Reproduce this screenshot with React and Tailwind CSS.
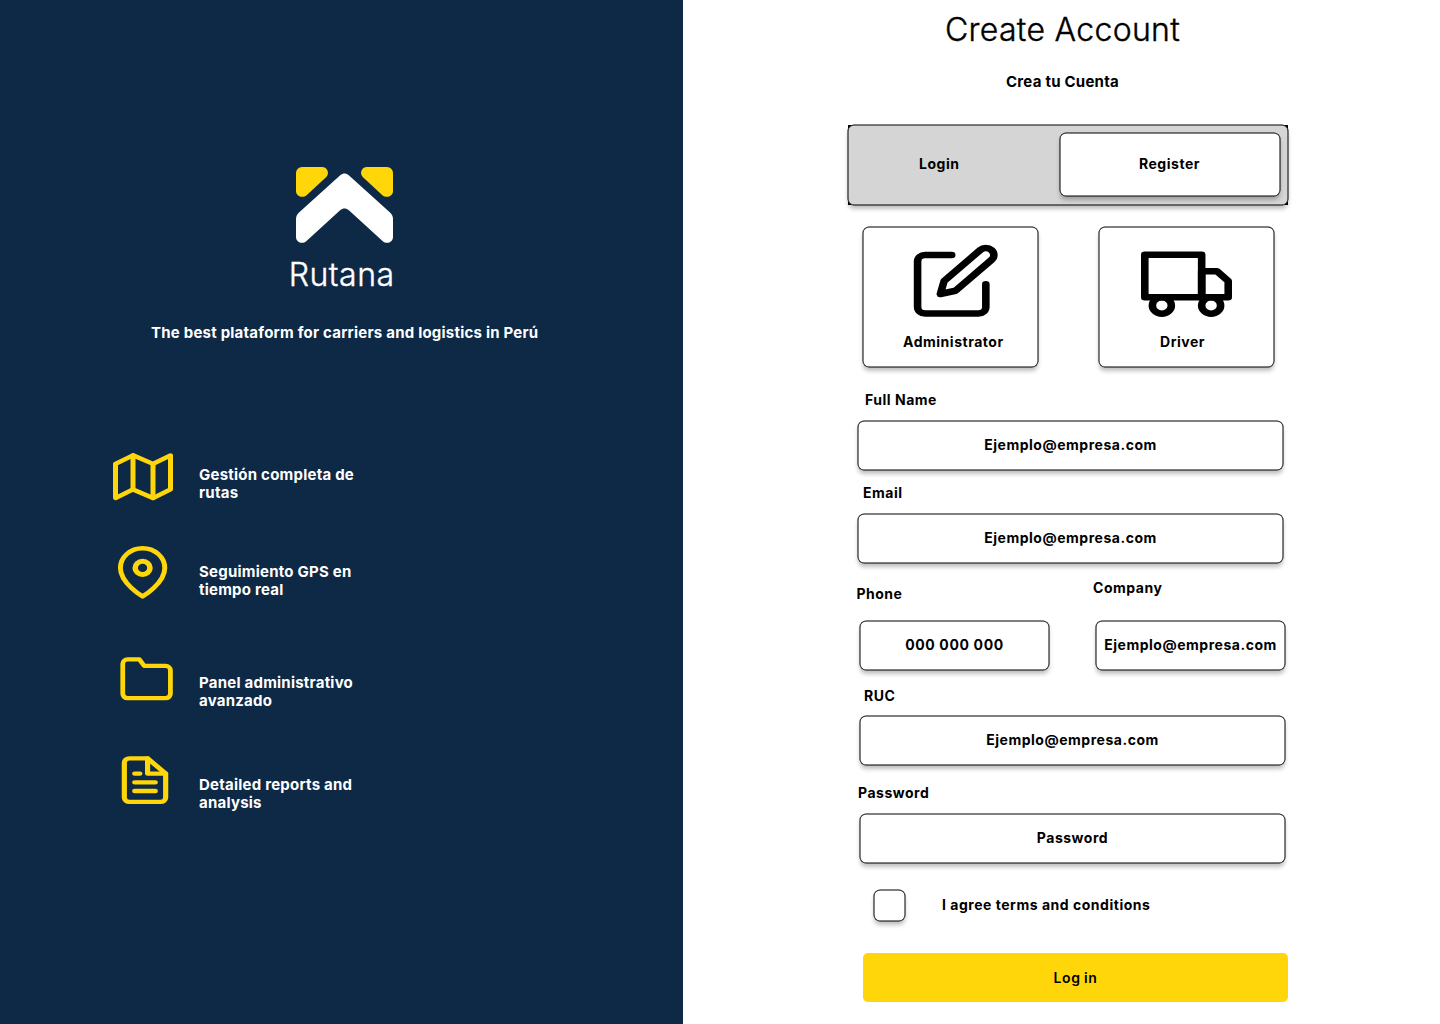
const outline =
  "rounded-[6px] bg-white shadow-[0_0_0_0.5px_#000,inset_0_0_0_0.5px_#000,0_4px_4px_rgba(0,0,0,0.25)]";

function Icon({ className, children }) {
  return (
    <svg
      className={className}
      viewBox="0 0 24 24"
      preserveAspectRatio="none"
      fill="none"
      stroke="currentColor"
      strokeWidth="2"
      strokeLinecap="round"
      strokeLinejoin="round"
      overflow="visible"
    >
      {children}
    </svg>
  );
}

function Logo() {
  return (
    <svg className="ml-[296px] h-[76px] w-[97px]" viewBox="0 0 97 76" overflow="visible">
      <path
        fill="#FFD60A"
        d="M6 0H26C31.5 0 34 6.4 30 10.2L10.6 28.2C6.6 31.8 0 29.2 0 24V6A6 6 0 0 1 6 0Z"
      />
      <path
        fill="#FFD60A"
        d="M91 0H71C65.5 0 63 6.4 67 10.2L86.4 28.2C90.4 31.8 97 29.2 97 24V6A6 6 0 0 0 91 0Z"
      />
      <path
        fill="#fff"
        d="M44.5 8C46.8 5.9 50.2 5.9 52.5 8L94 45.4C96 47.2 97 49.4 97 52V70C97 75.2 90.6 77.8 86.8 74.2L52.6 43C50.3 40.9 46.7 40.9 44.4 43L10.2 74.2C6.4 77.8 0 75.2 0 70V52C0 49.4 1 47.2 3 45.4Z"
      />
    </svg>
  );
}

function Feature({ className, text, children }) {
  return (
    <div className={`flex items-start ${className}`}>
      <div className="flex w-[199px] shrink-0 text-[#FFD60A]">{children}</div>
      <p className="w-[170px] text-[15px] leading-[18px] font-bold tracking-[0.23px]">{text}</p>
    </div>
  );
}

function Label({ className, children }) {
  return <label className={`block h-[18px] whitespace-nowrap ${className}`}>{children}</label>;
}

function Field({ className, children }) {
  return (
    <div className={`flex h-[49px] items-center justify-center pb-[1px] ${outline} ${className}`}>{children}</div>
  );
}

function BrandPanel() {
  return (
    <section className="w-[683px] shrink-0 bg-[#0E2946] pt-[167px] text-white">
      <Logo />
      <h1 className="mt-[12px] ml-[288.7px] h-[40px] text-[32px] leading-[40px] font-light tracking-[0.5px] [-webkit-text-stroke:0.4px_#fff]">
        Rutana
      </h1>
      <p className="mt-[29px] ml-[151px] h-[18px] text-[15px] leading-[18px] font-bold tracking-[0.22px] whitespace-nowrap">
        The best plataform for carriers and logistics in Perú
      </p>

      <Feature className="mt-[109px] h-[52px] [&>p]:mt-[15px]" text="Gestión completa de rutas">
        <Icon className="ml-[113px] h-[51.3px] w-[60px]">
          <polygon points="1 6 1 22 8 18 16 22 23 18 23 2 16 6 8 2 8 2" />
          <path d="M8 2v16M16 6v16" />
        </Icon>
      </Feature>
      <Feature className="mt-[43px] h-[53px] [&>p]:mt-[17px]" text="Seguimiento GPS en tiempo real">
        <Icon className="ml-[113px] h-[52.6px] w-[59.2px]">
          <path d="M21 10c0 7-9 13-9 13s-9-6-9-13a9 9 0 0 1 18 0z" />
          <circle cx="12" cy="10" r="3" strokeWidth="2.25" />
        </Icon>
      </Feature>
      <Feature className="mt-[54px] h-[52px] [&>p]:mt-[21px]" text="Panel administrativo avanzado">
        <Icon className="ml-[118px] h-[51.6px] w-[57.2px]">
          <path d="M22 19a2 2 0 0 1-2 2H4a2 2 0 0 1-2-2V5a2 2 0 0 1 2-2h5l2 3h9a2 2 0 0 1 2 2z" />
        </Icon>
      </Feature>
      <Feature className="mt-[49px] h-[52px] [&>p]:mt-[22px]" text="Detailed reports and analysis">
        <Icon className="ml-[114px] h-[52.3px] w-[62px]">
          <path d="M13 2H6a2 2 0 0 0-2 2v16a2 2 0 0 0 2 2h12a2 2 0 0 0 2-2V9z" />
          <path d="M13 2v7h7M16 13H8M16 17H8M10 9H8" />
        </Icon>
      </Feature>
    </section>
  );
}

function RegisterPanel() {
  return (
    <section className="flex-1 bg-white pt-[9px] pl-[165px] text-[14px] leading-[18px] font-bold tracking-[0.52px] text-black">
      <div className="w-[429px] text-center">
        <h2 className="h-[40px] pt-[1px] text-[32px] leading-[40px] font-light tracking-[0.3px] [-webkit-text-stroke:0.4px_#000]">
          Create Account
        </h2>
        <p className="mt-[24px] h-[18px] text-[15px] tracking-[0.24px]">Crea tu Cuenta</p>
      </div>

      <div className="mt-[34px] h-[80px] w-[440px] bg-black">
        <div className="flex h-full items-start rounded-[6px] bg-[#D5D5D5] pt-[8px] shadow-[0_0_0_0.5px_#000,inset_0_0_0_0.5px_#000,0_4px_4px_rgba(0,0,0,0.25)]">
          <div className="flex h-[63px] w-[212px] items-center pb-[1px] pl-[71px]">Login</div>
          <div className={`flex h-[63px] w-[220px] items-center justify-center pr-[1px] pb-[1px] ${outline}`}>
            Register
          </div>
        </div>
      </div>

      <div className="mt-[22px] ml-[15px] flex gap-[61px]">
        <div className={`h-[140px] w-[175px] ${outline}`}>
          <Icon className="mt-[15px] ml-[47px] h-[78px] w-[91px]">
            <path d="M11 4H4a2 2 0 0 0-2 2v14a2 2 0 0 0 2 2h14a2 2 0 0 0 2-2v-7" />
            <path d="M18.5 2.5a2.121 2.121 0 0 1 3 3L12 15l-4 1 1-4 9.5-9.5z" />
          </Icon>
          <p className="mt-[13px] ml-[40px]">Administrator</p>
        </div>
        <div className={`h-[140px] w-[175px] ${outline}`}>
          <Icon className="mt-[18px] ml-[42px] h-[78.5px] w-[91px]">
            <rect x="1" y="3" width="15" height="13" />
            <polygon points="16 8 20 8 23 11 23 16 16 16 16 8" />
            <circle cx="5.5" cy="18.5" r="2.5" />
            <circle cx="18.5" cy="18.5" r="2.5" />
          </Icon>
          <p className="mt-[9.5px] ml-[61px]">Driver</p>
        </div>
      </div>

      <Label className="mt-[24px] ml-[17px]">Full Name</Label>
      <Field className="mt-[12px] ml-[10px] w-[425px]">Ejemplo@empresa.com</Field>
      <Label className="mt-[14px] ml-[15px]">Email</Label>
      <Field className="mt-[12px] ml-[10px] w-[425px]">Ejemplo@empresa.com</Field>

      <div className="mt-[16px] flex items-start">
        <div className="w-[236px] pt-[6px]">
          <Label className="ml-[8.4px]">Phone</Label>
          <Field className="mt-[18px] ml-[12px] w-[189px]">
            <span className="tracking-[0.65px]">000 000 000</span>
          </Field>
        </div>
        <div>
          <Label className="ml-[9px]">Company</Label>
          <Field className="mt-[24px] ml-[12px] w-[189px]">Ejemplo@empresa.com</Field>
        </div>
      </div>

      <Label className="mt-[17px] ml-[16px]">RUC</Label>
      <Field className="mt-[11px] ml-[12px] w-[425px]">Ejemplo@empresa.com</Field>
      <Label className="mt-[19px] ml-[10px]">Password</Label>
      <Field className="mt-[12px] ml-[12px] w-[425px]">Password</Field>

      <div className="mt-[27px] ml-[26px] flex h-[31px] items-start">
        <div className={`h-[31px] w-[31px] ${outline}`} />
        <span className="mt-[6px] ml-[37px]">I agree terms and conditions</span>
      </div>

      <button className="mt-[32px] ml-[15px] block h-[49px] w-[425px] rounded-[5px] bg-[#FFD60A] font-semibold tracking-[0.7px] [word-spacing:-1px]">
        Log in
      </button>
    </section>
  );
}

export default function App() {
  return (
    <main className="flex h-[1024px] w-[1440px] overflow-hidden font-['Inter',sans-serif]">
      <BrandPanel />
      <RegisterPanel />
    </main>
  );
}
